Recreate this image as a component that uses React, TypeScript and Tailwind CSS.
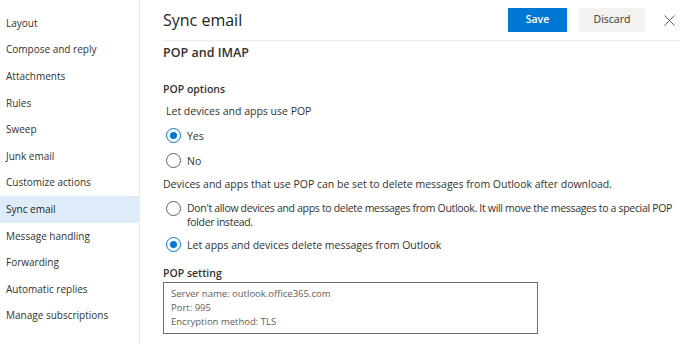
import React from "react";

const navItems = [
  "Layout",
  "Compose and reply",
  "Attachments",
  "Rules",
  "Sweep",
  "Junk email",
  "Customize actions",
  "Sync email",
  "Message handling",
  "Forwarding",
  "Automatic replies",
  "Manage subscriptions",
];

function Radio({ checked }: { checked: boolean }) {
  return (
    <span
      className={
        "flex h-[15px] w-[15px] shrink-0 items-center justify-center rounded-full border " +
        (checked ? "border-[#0078d4]" : "border-[#605e5c]")
      }
    >
      {checked && <span className="h-[7px] w-[7px] rounded-full bg-[#0078d4]" />}
    </span>
  );
}

export default function App() {
  return (
    <div
      className="flex h-[344px] w-[680px] overflow-hidden bg-white text-[#323130]"
      style={{ fontFamily: '"Open Sans", "Noto Sans", sans-serif' }}
    >
      <nav className="flex w-[140px] shrink-0 flex-col border-r border-[#edebe9] pt-[10px]">
        {navItems.map((n) => (
          <div
            key={n}
            className={
              "flex h-[26.6px] items-center pl-[6px] text-[10px] " +
              (n === "Sync email" ? "bg-[#deecf9] text-[#201f1e]" : "text-[#323130]")
            }
          >
            {n}
          </div>
        ))}
      </nav>
      <main className="flex min-w-0 flex-1 flex-col pl-[23px]">
        <header className="flex h-[41px] items-center border-b border-[#edebe9] pr-[3px]">
          <h1 className="flex-1 text-[16px] text-[#201f1e]">Sync email</h1>
          <button className="h-[24px] w-[59px] bg-[#0078d4] text-[10.5px] font-semibold text-white">
            Save
          </button>
          <button className="ml-[12px] h-[24px] w-[66px] bg-[#f3f2f1] text-[10.5px] text-[#323130]">
            Discard
          </button>
          <span className="ml-[16px] flex h-[16px] w-[16px] items-center justify-center text-[#605e5c]">
            <svg width="11" height="11" viewBox="0 0 11 11" fill="none" stroke="currentColor" strokeWidth="1">
              <path d="M0.5 0.5 L10.5 10.5 M10.5 0.5 L0.5 10.5" />
            </svg>
          </span>
        </header>
        <div className="flex flex-col">
          <h2 className="mt-[3px] text-[12.5px] font-semibold leading-[18px] text-[#323130]">POP and IMAP</h2>
          <h3 className="mt-[20px] text-[10.5px] font-semibold leading-[14px]">POP options</h3>
          <p className="mt-[8px] pl-[3px] text-[10.5px] leading-[14px]">Let devices and apps use POP</p>
          <label className="mt-[10px] flex items-center gap-[6px] pl-[3px] text-[10.5px] leading-[14px]">
            <Radio checked />
            Yes
          </label>
          <label className="mt-[10px] flex items-center gap-[6px] pl-[3px] text-[10.5px] leading-[14px]">
            <Radio checked={false} />
            No
          </label>
          <p className="mt-[9px] text-[10.5px] leading-[14px]">
            Devices and apps that use POP can be set to delete messages from Outlook after download.
          </p>
          <label className="mt-[10px] flex items-start gap-[6px] pl-[3px] text-[10.5px] leading-[14px]">
            <Radio checked={false} />
            <span className="whitespace-nowrap tracking-[-0.32px]">
              Don't allow devices and apps to delete messages from Outlook. It will move the messages to a special POP
              <br />
              folder instead.
            </span>
          </label>
          <label className="mt-[8px] flex items-center gap-[6px] pl-[3px] text-[10.5px] leading-[14px]">
            <Radio checked />
            Let apps and devices delete messages from Outlook
          </label>
          <h3 className="mt-[14px] text-[10.5px] font-semibold leading-[14px]">POP setting</h3>
          <div className="mt-[2px] w-[375px] border border-[#6e6e6e] px-[7px] py-[4px] text-[9.5px] leading-[14px] text-[#605e5c]">
            <div>Server name: outlook.office365.com</div>
            <div>Port: 995</div>
            <div>Encryption method: TLS</div>
          </div>
        </div>
      </main>
    </div>
  );
}
